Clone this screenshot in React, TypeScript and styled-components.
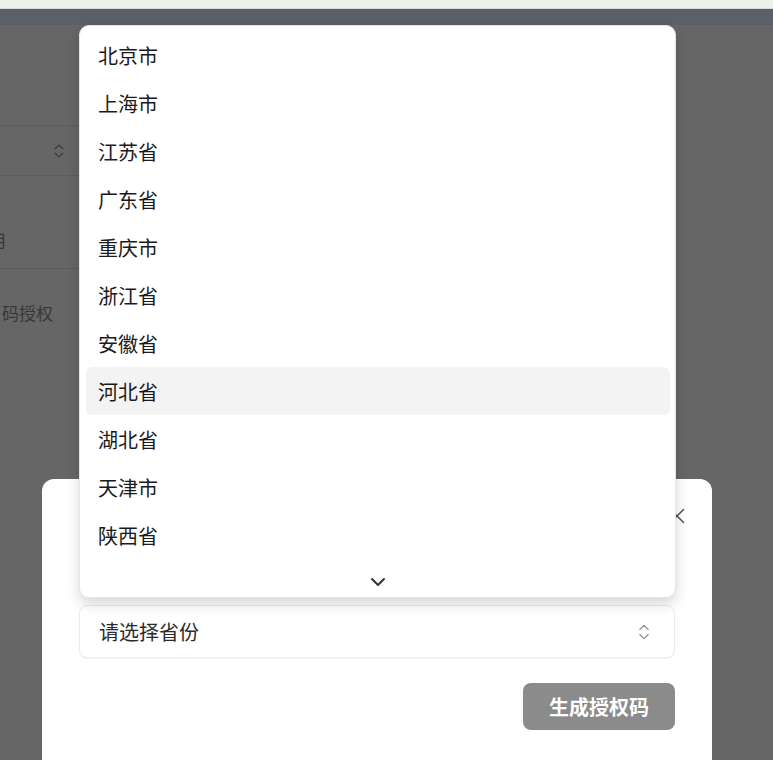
import React from 'react';
import styled, { createGlobalStyle } from 'styled-components';
import { ChevronsUpDown, ChevronDown, X } from 'lucide-react';

const GlobalStyle = createGlobalStyle`
  *, *::before, *::after { box-sizing: border-box; }
  html, body { margin: 0; padding: 0; }
  body {
    font-family: "Noto Sans CJK SC", "Noto Sans", sans-serif;
    background: #666666;
    overflow: hidden;
  }
`;

const Screen = styled.div`
  position: relative;
  width: 773px;
  height: 760px;
  overflow: hidden;
  display: flex;
  flex-direction: column;
  background: #666666;
`;

const BrowserEdge = styled.div`
  height: 9px;
  background: #eef0ec;
  border-bottom: 1px solid #d6d8d3;
`;

const TopBar = styled.div`
  height: 16px;
  background: #5a5f68;
`;

const Backdrop = styled.div`
  flex: 1;
  display: flex;
`;

const BgColumn = styled.div`
  width: 80px;
  display: flex;
  flex-direction: column;
`;

const BgRow = styled.div<{ $h: number; $pt?: number }>`
  height: ${(p) => p.$h}px;
  padding-top: ${(p) => p.$pt ?? 0}px;
  border-bottom: 1px solid #5d5d5d;
  display: flex;
  align-items: center;
  justify-content: space-between;
  padding-right: 12px;
  color: #3a3a3a;
`;

const BgText = styled.span<{ $shift?: number }>`
  font-size: 17px;
  line-height: 24px;
  color: #383838;
  white-space: nowrap;
  margin-left: ${(p) => p.$shift ?? 0}px;
`;

const BgLabel = styled(BgText)`
  margin-top: 32px;
  margin-left: 2px;
`;

const Modal = styled.div`
  position: absolute;
  left: 42px;
  top: 479px;
  width: 670px;
  height: 320px;
  background: #ffffff;
  border-radius: 12px;
  padding: 24px 37px;
  display: flex;
  flex-direction: column;
`;

const CloseButton = styled.button`
  position: absolute;
  top: 24px;
  right: 22px;
  width: 26px;
  height: 26px;
  padding: 0;
  border: none;
  background: transparent;
  color: #555;
  display: flex;
  align-items: center;
  justify-content: center;
`;

const Title = styled.h2`
  margin: 0;
  font-size: 20px;
  line-height: 28px;
  font-weight: 600;
  color: #1f1f1f;
`;

const Field = styled.div`
  margin-top: 40px;
  display: flex;
  flex-direction: column;
  gap: 12px;
`;

const Label = styled.label`
  font-size: 16px;
  line-height: 22px;
  color: #333;
`;

const Trigger = styled.button`
  height: 53px;
  width: 100%;
  display: flex;
  align-items: center;
  justify-content: space-between;
  padding: 0 20px 0 19px;
  background: #fff;
  border: 1px solid #ececec;
  border-radius: 8px;
  box-shadow: 0 1px 2px rgba(0, 0, 0, 0.05);
  font-family: inherit;
  font-size: 20px;
  color: #2b2b2b;
`;

const Footer = styled.div`
  margin-top: 25px;
  display: flex;
  justify-content: flex-end;
`;

const Submit = styled.button`
  width: 152px;
  height: 47px;
  border: none;
  border-radius: 8px;
  background: #8b8b8b;
  color: #ffffff;
  font-family: inherit;
  font-size: 20px;
  font-weight: 700;
`;

const Dropdown = styled.div`
  position: absolute;
  left: 79px;
  top: 25px;
  width: 597px;
  height: 573px;
  background: #ffffff;
  border: 1px solid #e6e6e6;
  border-radius: 10px;
  box-shadow: 0 6px 14px rgba(0, 0, 0, 0.16);
  padding: 5px 5px 0 6px;
  display: flex;
  flex-direction: column;
  overflow: hidden;
`;

const Option = styled.div<{ $active?: boolean }>`
  height: 48px;
  flex-shrink: 0;
  display: flex;
  align-items: center;
  padding-left: 12px;
  border-radius: 6px;
  font-size: 20px;
  color: #1a1a1a;
  background: ${(p) => (p.$active ? '#f3f3f3' : 'transparent')};
`;

const ScrollDown = styled.div`
  flex: 1;
  display: flex;
  align-items: center;
  justify-content: center;
  padding-top: 8px;
  color: #333;
`;

const provinces = [
  '北京市',
  '上海市',
  '江苏省',
  '广东省',
  '重庆市',
  '浙江省',
  '安徽省',
  '河北省',
  '湖北省',
  '天津市',
  '陕西省',
];

export default function App() {
  return (
    <>
      <GlobalStyle />
      <Screen>
        <BrowserEdge />
        <TopBar />
        <Backdrop>
          <BgColumn>
            <BgRow $h={101} />
            <BgRow $h={50}>
              <span />
              <ChevronsUpDown size={18} strokeWidth={1.5} color="#3a3a3a" />
            </BgRow>
            <BgRow $h={93} $pt={36}>
              <BgText $shift={-28}>使用</BgText>
            </BgRow>
            <BgLabel>码授权</BgLabel>
          </BgColumn>
        </Backdrop>

        <Modal>
          <CloseButton aria-label="关闭">
            <X size={26} strokeWidth={1.4} />
          </CloseButton>
          <Title>生成授权码</Title>
          <Field>
            <Label>省份</Label>
            <Trigger>
              <span>请选择省份</span>
              <ChevronsUpDown size={20} strokeWidth={1.4} color="#8a8a8a" />
            </Trigger>
          </Field>
          <Footer>
            <Submit>生成授权码</Submit>
          </Footer>
        </Modal>

        <Dropdown>
          {provinces.map((name) => (
            <Option key={name} $active={name === '河北省'}>
              {name}
            </Option>
          ))}
          <ScrollDown>
            <ChevronDown size={24} strokeWidth={2} />
          </ScrollDown>
        </Dropdown>
      </Screen>
    </>
  );
}
